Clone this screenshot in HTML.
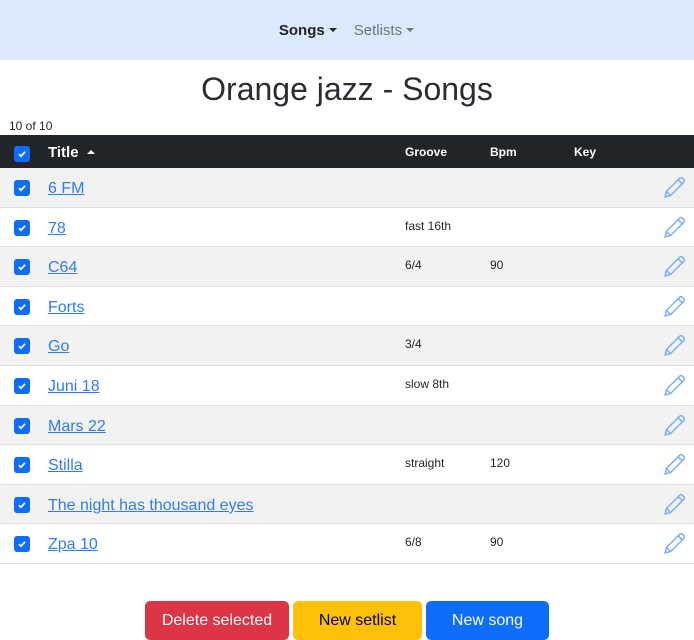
<!DOCTYPE html>
<html><head><style>
*{box-sizing:border-box;margin:0;padding:0}
body{width:694px;height:640px;overflow:hidden;font-family:"Liberation Sans",Arial,sans-serif;background:#fff;color:#212529;position:relative}
.nav{height:60px;background:#dbe9fc;display:flex;justify-content:center;align-items:center;gap:17px;font-size:15px;padding-right:1px}
.nav b{color:#212529}
.nav span{color:#6c757d}
.car{display:inline-block;width:0;height:0;border-left:4px solid transparent;border-right:4px solid transparent;border-top:4px solid currentColor;vertical-align:3px;margin-left:4px}
h1{font-weight:300;font-size:32px;text-align:center;position:absolute;top:69px;width:100%;line-height:40px;color:#2a2e33}
.cnt{position:absolute;top:119px;left:9px;font-size:12px}
.tbl{position:absolute;top:135px;left:0;width:694px}
.hd{height:33px;background:#212529;color:#fff;position:relative;font-weight:bold}
.row{height:39.6px;position:relative;border-bottom:1px solid #dee2e6}
.cb{position:absolute;left:14px;width:16px;height:16px;background:#0d6efd;border-radius:3px}
.cb svg{position:absolute;left:2px;top:2px}
.hd .cb{top:11px}
.row .cb{top:12px}
.t{position:absolute;left:48px;top:12px;font-size:16px;color:#2f7cf6;text-decoration:underline}
.g{position:absolute;top:11px;font-size:12px}
.p{position:absolute;left:663px;top:9px}
.btns{position:absolute;top:601px;left:145px;display:flex;gap:4px}
.btn{height:39px;border-radius:5px;font-size:16px;color:#fff;display:flex;align-items:center;justify-content:center}
</style></head><body>
<div class="nav"><b>Songs<i class="car"></i></b><span>Setlists<i class="car"></i></span></div>
<h1>Orange jazz - Songs</h1>
<div class="cnt">10 of 10</div>
<div class="tbl">
<div class="hd"><div class="cb"><svg width="12" height="12" viewBox="0 0 12 12"><path d="M3 6.2l2 2 4-4.4" stroke="#fff" stroke-width="1.8" fill="none"/></svg></div>
<span style="position:absolute;left:48px;top:9px;font-size:15px">Title <i class="car" style="border-top:0;border-bottom:4px solid #fff;vertical-align:3px"></i></span>
<span style="position:absolute;left:405px;top:10px;font-size:12px">Groove</span>
<span style="position:absolute;left:490px;top:10px;font-size:12px">Bpm</span>
<span style="position:absolute;left:574px;top:10px;font-size:12px">Key</span></div>
<div id="rows"></div>
</div>
<div class="btns">
<div class="btn" style="width:144px;background:#dc3545">Delete selected</div>
<div class="btn" style="width:129px;background:#ffc107;color:#000">New setlist</div>
<div class="btn" style="width:123px;background:#0d6efd">New song</div>
</div>
<script>
var d=[["6 FM","",""],["78","fast 16th",""],["C64","6/4","90"],["Forts","",""],["Go","3/4",""],["Juni 18","slow 8th",""],["Mars 22","",""],["Stilla","straight","120"],["The night has thousand eyes","",""],["Zpa 10","6/8","90"]];
var h="";d.forEach(function(r,i){h+='<div class="row" style="background:'+(i%2?'#fff':'#f2f2f2')+'"><div class="cb"><svg width="12" height="12" viewBox="0 0 12 12"><path d="M3 6.2l2 2 4-4.4" stroke="#fff" stroke-width="1.8" fill="none"/></svg></div><span class="t">'+r[0]+'</span><span class="g" style="left:405px">'+r[1]+'</span><span class="g" style="left:490px">'+r[2]+'</span><svg class="p" width="22" height="22" viewBox="0 0 16 16"><path d="M12.1.9a1.5 1.5 0 0 1 2.1 0l.9.9a1.5 1.5 0 0 1 0 2.1L5.5 13.5 1.5 14.5l1-4zM11 2l3 3M2.5 10.5l3 3" fill="none" stroke="#6ea8fe" stroke-width="1"/></svg></div>';});
document.getElementById("rows").innerHTML=h;
</script>
</body></html>
